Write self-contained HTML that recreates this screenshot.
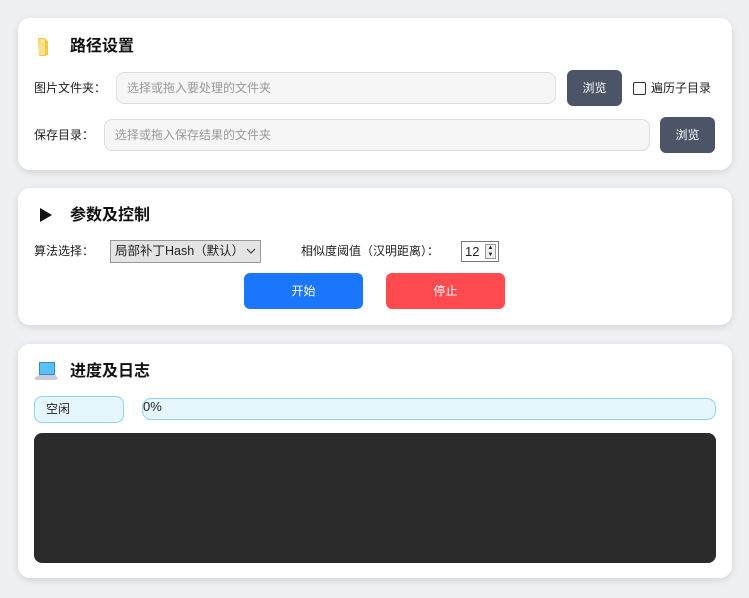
<!DOCTYPE html>
<html><head><meta charset="utf-8"><style>
*{box-sizing:border-box;margin:0;padding:0}
body{width:749px;height:598px;background:#eef0f3;font-family:"Liberation Sans","Noto Sans CJK SC",sans-serif;font-size:12px;color:#222;position:relative;overflow:hidden}
.a{position:absolute}
.card{position:absolute;left:18px;width:714px;background:#fff;border-radius:12px;box-shadow:0 2px 8px rgba(0,0,0,.12)}
.t{position:absolute;left:70px;font-size:16px;font-weight:bold;color:#111;line-height:20px}
.lab{position:absolute;font-size:12px;line-height:16px}
.inp{position:absolute;height:32px;background:#f6f6f6;border:1px solid #ddd;border-radius:8px;color:#999;font-size:12px;line-height:30px;padding-left:10px}
.btn{position:absolute;width:55px;height:36px;background:#4b5567;border-radius:6px;color:#fff;font-size:12px;text-align:center;line-height:36px}
.big{position:absolute;width:119px;height:36px;border-radius:6px;color:#fff;font-size:12px;text-align:center;line-height:36px}
</style></head><body>
<div class="card" style="top:18px;height:152px"></div>
<div class="card" style="top:188px;height:137px"></div>
<div class="card" style="top:344px;height:234px"></div>

<svg class="a" style="left:36px;top:36px" width="16" height="22" viewBox="0 0 16 22"><path d="M2 2h7l3 3v14l-3 1H3z" fill="#f2c84b"/><path d="M3 3h6v16H3z" fill="#fbe08a"/></svg>
<div class="t" style="top:37px">路径设置</div>
<div class="lab" style="left:34px;top:80px">图片文件夹：</div>
<div class="inp" style="left:116px;top:72px;width:440px">选择或拖入要处理的文件夹</div>
<div class="btn" style="left:567px;top:70px">浏览</div>
<div class="a" style="left:633px;top:82px;width:13px;height:13px;border:1px solid #333;border-radius:2px"></div>
<div class="lab" style="left:651px;top:80px">遍历子目录</div>
<div class="lab" style="left:34px;top:127px">保存目录：</div>
<div class="inp" style="left:104px;top:119px;width:546px">选择或拖入保存结果的文件夹</div>
<div class="btn" style="left:660px;top:117px">浏览</div>

<svg class="a" style="left:39px;top:207px" width="14" height="16" viewBox="0 0 14 16"><path d="M1 1L13 8L1 15z" fill="#111"/></svg>
<div class="t" style="top:206px">参数及控制</div>
<div class="lab" style="left:34px;top:243px">算法选择：</div>
<div class="a" style="left:110px;top:240px;width:151px;height:23px;background:#e4e4e4;border:1px solid #999;font-size:12.5px;line-height:21px;padding-left:4px;white-space:nowrap">局部补丁Hash（默认）</div>
<svg class="a" style="left:246px;top:248px" width="10" height="7" viewBox="0 0 10 7"><path d="M1 1l4 4 4-4" fill="none" stroke="#444" stroke-width="1.2"/></svg>
<div class="lab" style="left:301px;top:243px">相似度阈值（汉明距离）：</div>
<div class="a" style="left:461px;top:241px;width:38px;height:21px;border:1px solid #777;font-size:13px;line-height:19px;padding-left:3px">12
<div class="a" style="right:2px;top:2px;width:11px;height:15px;border:1px solid #999;background:#eee;font-size:6px;line-height:7px;text-align:center">▲<br>▼</div></div>
<div class="big" style="left:244px;top:273px;background:#1a77fb">开始</div>
<div class="big" style="left:386px;top:273px;background:#ff4a50">停止</div>

<svg class="a" style="left:33px;top:361px" width="26" height="22" viewBox="0 0 26 22"><path d="M6 1h16v13H6z" fill="#2c8ed8"/><path d="M7 2h14v11H7z" fill="#5cc0f5"/><path d="M1 17l5-3h16l3 3-2 2H3z" fill="#c9cdd2"/></svg>
<div class="t" style="top:362px">进度及日志</div>
<div class="a" style="left:34px;top:396px;width:90px;height:27px;background:#e6f6fd;border:1px solid #8fd3f5;border-radius:8px;font-size:12px;line-height:25px;padding-left:11px">空闲</div>
<div class="a" style="left:142px;top:398px;width:574px;height:22px;background:#e6f6fd;border:1px solid #8fd3f5;border-radius:9px;font-size:13px;line-height:16px">0%</div>
<div class="a" style="left:34px;top:433px;width:682px;height:130px;background:#2b2b2b;border-radius:8px"></div>
</body></html>
